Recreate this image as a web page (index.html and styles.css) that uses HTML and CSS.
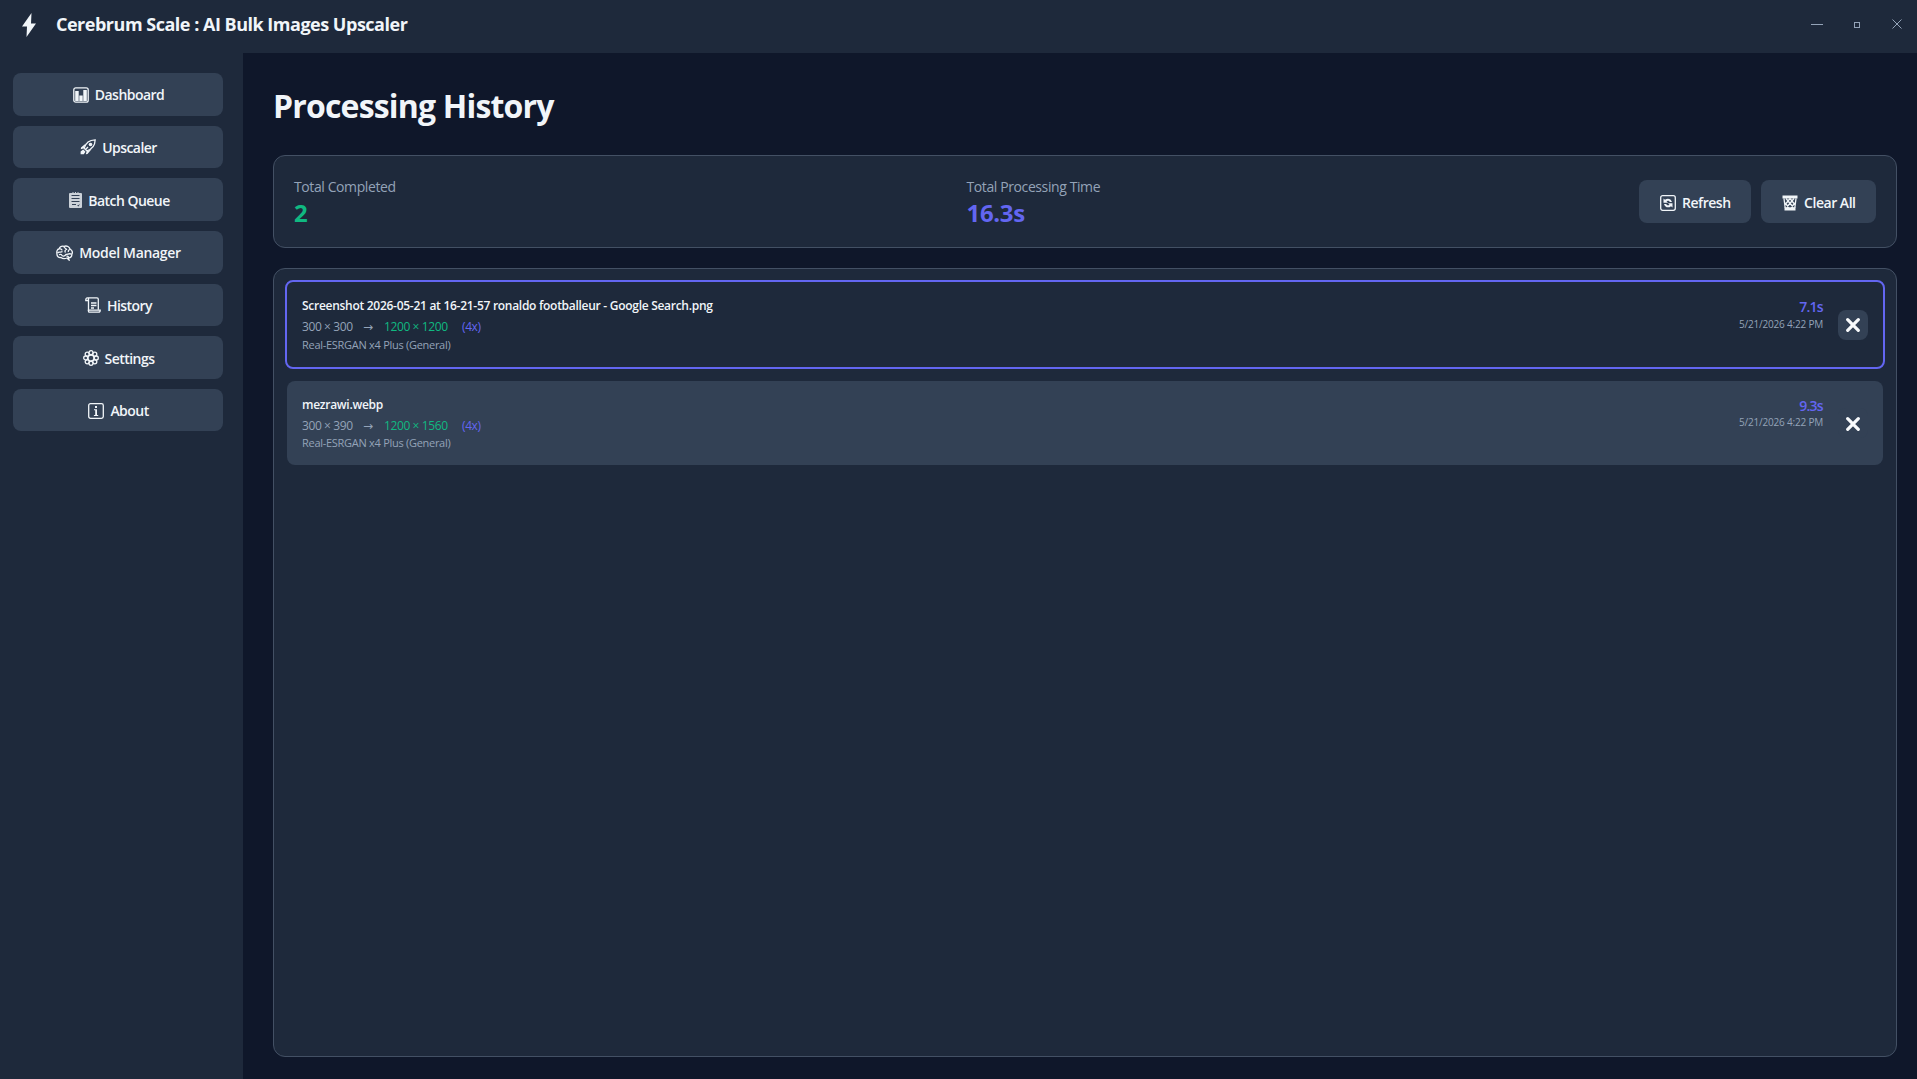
FILE: index.html
```html
<!DOCTYPE html>
<html lang="en">
<head>
  <meta charset="UTF-8" />
  <meta name="viewport" content="width=device-width, initial-scale=1.0"/>
  <title>Cerebrum Scale : AI Bulk Images Upscaler</title>
  <link rel="stylesheet" href="styles.css">
</head>
<body>
  <header class="titlebar">
    <svg class="logo" viewBox="0 0 14 24"><path d="M9.5 0 L0 13.5 H5 L4.5 24 L14 10.5 H9 Z" fill="currentColor"/></svg>
    <span class="app-title">Cerebrum Scale : AI Bulk Images Upscaler</span>
    <div class="window-controls">
      <svg viewBox="0 0 12 12"><path d="M0 6.5 H12"/></svg>
      <svg viewBox="0 0 12 12"><rect x="3.5" y="4.5" width="5" height="5"/></svg>
      <svg viewBox="0 0 12 12"><path d="M1.5 1.5 L10.5 10.5 M10.5 1.5 L1.5 10.5"/></svg>
    </div>
  </header>

  <div class="layout">
    <nav class="sidebar">
      <button class="btn">
        <svg class="icon" viewBox="0 0 16 16"><rect x="0.8" y="0.8" width="14.4" height="14.4" rx="2"/><path class="solid" d="M2.2 4 H5.7 V14 H2.2 Z M6.3 8.5 H9.7 V14 H6.3 Z M10.3 3 H13.8 V14 H10.3 Z"/></svg>
        <span>Dashboard</span>
      </button>
      <button class="btn">
        <svg class="icon" viewBox="0 0 16 16"><path d="M4.2 9.2 C5.5 4.5 9 1 15.2 0.8 C15 7 11.5 10.5 6.8 11.8 Z"/><circle class="solid" cx="10.5" cy="5.5" r="1.8"/><path class="solid" d="M5.8 4.5 L1 8.5 L0.8 10.3 L4 9.3 Z M11.5 10.2 L7.5 15 L5.8 15.2 L6.8 12 Z M3.2 10.5 L5.5 12.8 L3.8 15.3 H0.6 V12.5 Z"/><path d="M5.5 10.5 L8 8"/></svg>
        <span>Upscaler</span>
      </button>
      <button class="btn">
        <svg class="icon icon-clipboard" viewBox="0 0 13 16"><path class="solid" fill-rule="evenodd" d="M1 1 H3.5 V0 H4.5 V1 H6 V0 H7 V1 H8.5 V0 H9.5 V1 H12 Q13 1 13 2 V15 Q13 16 12 16 H1 Q0 16 0 15 V2 Q0 1 1 1 Z M2.5 3 V4 H10.5 V3 Z M2.5 6 V7 H10.5 V6 Z M2.5 9 V10 H10.5 V9 Z M3 12 V13 H7 V12 Z M8 13.5 L9.5 14.5 L11 12 L9.5 13 Z"/></svg>
        <span>Batch Queue</span>
      </button>
      <button class="btn btn-models">
        <svg class="icon icon-brain" viewBox="0 0 17 16"><path d="M5 12.5 C2.5 13 0.8 11 1 9 C0.3 6 1.5 4.3 3 4 C4 1.5 6.5 1 8 1.3 C11 0.3 13.5 2 14 4 C16.5 5.5 16.6 8 15.8 9.5 C16 12 14 13 12.5 12.5 L13 15 L11 13 C9 13.8 6.5 13.8 5 12.5 Z"/><path d="M1.5 8 C3 6 4.5 8 6.5 6.5 M3.5 4 C5 3.5 6 4.5 6 5.5 M8 1.5 C8 3.5 10 3 10.5 4.5 C9 5 8.5 6.5 9.5 7.5 M14 4.5 C12.5 5 12 6 12.5 7 M15.8 9.3 C13 7.8 12 9.5 10 9.5 C8.5 11.5 6.5 11.5 5.5 10 M3 9.8 C4.5 9 5.5 9.3 5.5 10 M12.5 12.5 C12.5 11.3 11.5 11 10.5 11.3"/></svg>
        <span>Model Manager</span>
      </button>
      <button class="btn">
        <svg class="icon" viewBox="0 0 16 16"><path d="M3.3 3.5 H0.8 Q0.6 0.8 2.5 0.8 H12 Q13.3 0.8 13.3 2.3 V12.8 M3.5 1 V14"/><path d="M3.5 13.2 H15.2 Q15.2 15.2 13.5 15.2 H4.5 Q3.2 15.2 3.5 13.2 Z"/><path d="M6 6 H11.5 M6 8.5 H11.5 M6 11 H9"/></svg>
        <span>History</span>
      </button>
      <button class="btn">
        <svg class="icon" viewBox="0 0 16 16"><circle cx="8" cy="8" r="3"/><circle cx="8" cy="2.7" r="2"/><circle cx="11.8" cy="4.2" r="2"/><circle cx="13.3" cy="8" r="2"/><circle cx="11.8" cy="11.8" r="2"/><circle cx="8" cy="13.3" r="2"/><circle cx="4.2" cy="11.8" r="2"/><circle cx="2.7" cy="8" r="2"/><circle cx="4.2" cy="4.2" r="2"/></svg>
        <span>Settings</span>
      </button>
      <button class="btn">
        <svg class="icon" viewBox="0 0 16 16"><rect x="0.7" y="0.7" width="14.6" height="14.6" rx="1.8"/><path class="solid" d="M7 3 H9 V5 H7 Z M6 6.3 H9 V12 H10.2 V13 H5.9 V12 H7.2 V7.3 H6 Z"/></svg>
        <span>About</span>
      </button>
    </nav>

    <main class="content">
      <h1>Processing History</h1>

      <section class="stats">
        <div class="stat">
          <div class="stat-label">Total Completed</div>
          <div class="stat-value green">2</div>
        </div>
        <div class="stat">
          <div class="stat-label">Total Processing Time</div>
          <div class="stat-value purple">16.3s</div>
        </div>
        <div class="actions">
          <button class="btn">
            <svg class="icon" viewBox="0 0 16 16"><rect x="0.7" y="0.7" width="14.6" height="14.6" rx="2"/><path class="solid" d="M3.5 3.5 L5 4.8 C7.5 2.6 11 3.6 12 7 H9.8 C9.2 5.5 7.6 5.2 6.5 6.3 L8 7.8 H3.5 Z M12.5 12.5 L11 11.2 C8.5 13.4 5 12.4 4 9 H6.2 C6.8 10.5 8.4 10.8 9.5 9.7 L8 8.3 H12.5 Z"/></svg>
            <span>Refresh</span>
          </button>
          <button class="btn">
            <svg class="icon" viewBox="0 0 16 16"><path class="solid" d="M0.5 0.5 H15.5 V3.5 H0.5 Z"/><path d="M2 3.5 L3.2 13 M14 3.5 L12.8 13 M4 3.5 L11.5 12.5 M12 3.5 L4.5 12.5 M8 3.5 L12.8 9.5 M8 3.5 L3.2 9.5 M3 8 L7 12.5 M13 8 L9 12.5"/><path class="solid" d="M2.5 12.3 H13.5 V15.5 H2.5 Z"/></svg>
            <span>Clear All</span>
          </button>
        </div>
      </section>

      <section class="history">
        <article class="item selected">
          <div class="item-info">
            <div class="file-name">Screenshot 2026-05-21 at 16-21-57 ronaldo footballeur - Google Search.png</div>
            <div class="sizes">
              <span class="size-in">300 × 300</span>
              <span class="arrow">→</span>
              <span class="size-out">1200 × 1200</span>
              <span class="purple">(4x)</span>
            </div>
            <div class="model">Real-ESRGAN x4 Plus (General)</div>
          </div>
          <div class="item-meta">
            <div class="duration">7.1s</div>
            <div class="date">5/21/2026 4:22 PM</div>
          </div>
          <button class="remove"><svg viewBox="0 0 14 14"><path d="M1.7 1.7 L12.3 12.3 M12.3 1.7 L1.7 12.3"/></svg></button>
        </article>

        <article class="item">
          <div class="item-info">
            <div class="file-name">mezrawi.webp</div>
            <div class="sizes">
              <span class="size-in">300 × 390</span>
              <span class="arrow">→</span>
              <span class="size-out">1200 × 1560</span>
              <span class="purple">(4x)</span>
            </div>
            <div class="model">Real-ESRGAN x4 Plus (General)</div>
          </div>
          <div class="item-meta">
            <div class="duration">9.3s</div>
            <div class="date">5/21/2026 4:22 PM</div>
          </div>
          <button class="remove"><svg viewBox="0 0 14 14"><path d="M1.7 1.7 L12.3 12.3 M12.3 1.7 L1.7 12.3"/></svg></button>
        </article>
      </section>
    </main>
  </div>
</body>
</html>
```
FILE: styles.css
```css
* {
  box-sizing: border-box;
}

body {
  margin: 0;
  height: 100vh;
  display: flex;
  flex-direction: column;
  overflow: hidden;
  background-color: #0f172a;
  color: #f1f5f9;
  font-family: 'Segoe UI', 'Open Sans', sans-serif;
}

.titlebar {
  height: 53px;
  flex: none;
  display: flex;
  align-items: center;
  padding: 0 14px 6px 22px;
  background-color: #1e293b;
}

.logo {
  width: 14px;
  height: 24px;
  margin: 2px 20px 0 0;
}

.app-title {
  font-size: 18px;
  font-weight: bold;
  letter-spacing: -0.49px;
}

.window-controls {
  display: flex;
  gap: 28px;
  margin-left: auto;
}

.window-controls svg {
  width: 12px;
  height: 12px;
  fill: none;
  stroke: #94a3b8;
}

.layout {
  flex: 1;
  display: flex;
  min-height: 0;
}

.sidebar {
  width: 243px;
  flex: none;
  display: flex;
  flex-direction: column;
  gap: 10px;
  padding: 20px 20px 0 13px;
  background-color: #1e293b;
}

.btn {
  height: 42.65px;
  display: flex;
  flex: none;
  justify-content: center;
  align-items: center;
  gap: 6px;
  padding: 1px 19px 0 20px;
  border: none;
  border-radius: 8px;
  background-color: #334155;
  color: #f1f5f9;
  font: 600 14px 'Segoe UI', 'Open Sans', sans-serif;
  letter-spacing: -0.54px;
  cursor: pointer;
}

.btn-models {
  letter-spacing: -0.33px;
}

.icon {
  width: 16px;
  height: 16px;
  flex: none;
  fill: none;
  stroke: currentColor;
  stroke-width: 1.3;
}

.icon .solid {
  fill: currentColor;
  stroke: none;
}

.icon-clipboard {
  width: 13px;
  margin-left: 2px;
  opacity: 0.8;
}

.icon-brain {
  width: 17px;
}

.content {
  flex: 1;
  display: flex;
  flex-direction: column;
  padding: 31px 20px 22px 30px;
}

h1 {
  margin: 0 0 27px;
  font-size: 32px;
  line-height: 44px;
  letter-spacing: -0.82px;
}

.stats {
  height: 93px;
  flex: none;
  display: grid;
  grid-template-columns: 1fr 1fr auto;
  align-items: center;
  margin-bottom: 20px;
  padding: 0 20px;
  border: 1px solid #435064;
  border-radius: 12px;
  background-color: #1e293b;
}

.stat-label {
  margin-top: 1px;
  color: #94a3b8;
  font-size: 14px;
  line-height: 20px;
  letter-spacing: -0.4px;
}

.stat-value {
  font-size: 24px;
  font-weight: bold;
  line-height: 31px;
  letter-spacing: -0.35px;
}

.green {
  color: #10b981;
}

.purple {
  color: #6366f1;
}

.actions {
  display: flex;
  gap: 10px;
}

.actions .btn {
  padding: 3px 20.5px 0 21px;
  letter-spacing: -0.48px;
}

.history {
  flex: 1;
  padding: 11px;
  border: 1px solid #435064;
  border-radius: 12px;
  background-color: #1e293b;
}

.item {
  display: flex;
  align-items: center;
  margin: 12px 2px 0;
  padding: 14px 15px;
  border-radius: 8px;
  background-color: #334155;
}

.item.selected {
  margin: 0;
  border: 2px solid #6366f1;
  background-color: #1e293b;
}

.item-info {
  flex: 1;
}

.file-name {
  font-size: 12px;
  font-weight: 600;
  line-height: 20.5px;
  letter-spacing: -0.28px;
}

.sizes {
  display: flex;
  color: #94a3b8;
  font-size: 12px;
  line-height: 20.5px;
  letter-spacing: -0.4px;
}

.sizes .size-in {
  width: 61px;
}

.sizes .arrow {
  width: 21px;
  font-family: 'Segoe UI', 'DejaVu Sans', sans-serif;
  letter-spacing: 0;
}

.sizes .size-out {
  width: 78px;
  color: #10b981;
}

.model {
  padding-bottom: 1px;
  color: #94a3b8;
  font-size: 11px;
  line-height: 14px;
  letter-spacing: -0.28px;
}

.item-meta {
  align-self: flex-start;
  margin-right: 15px;
  text-align: right;
}

.duration {
  color: #6366f1;
  font-size: 14px;
  font-weight: 600;
  line-height: 22px;
  letter-spacing: -0.7px;
}

.date {
  color: #94a3b8;
  font-size: 10px;
  line-height: 10px;
  letter-spacing: -0.2px;
}

.selected .model,
.selected .date {
  margin-top: 1px;
}

.remove {
  width: 30px;
  height: 30px;
  display: flex;
  justify-content: center;
  align-items: center;
  padding: 1px 0 0;
  border: none;
  border-radius: 8px;
  background-color: #334155;
}

.remove svg {
  width: 14px;
  height: 14px;
  fill: none;
  stroke: #f8fafc;
  stroke-width: 3.2;
  stroke-linecap: round;
}
```
